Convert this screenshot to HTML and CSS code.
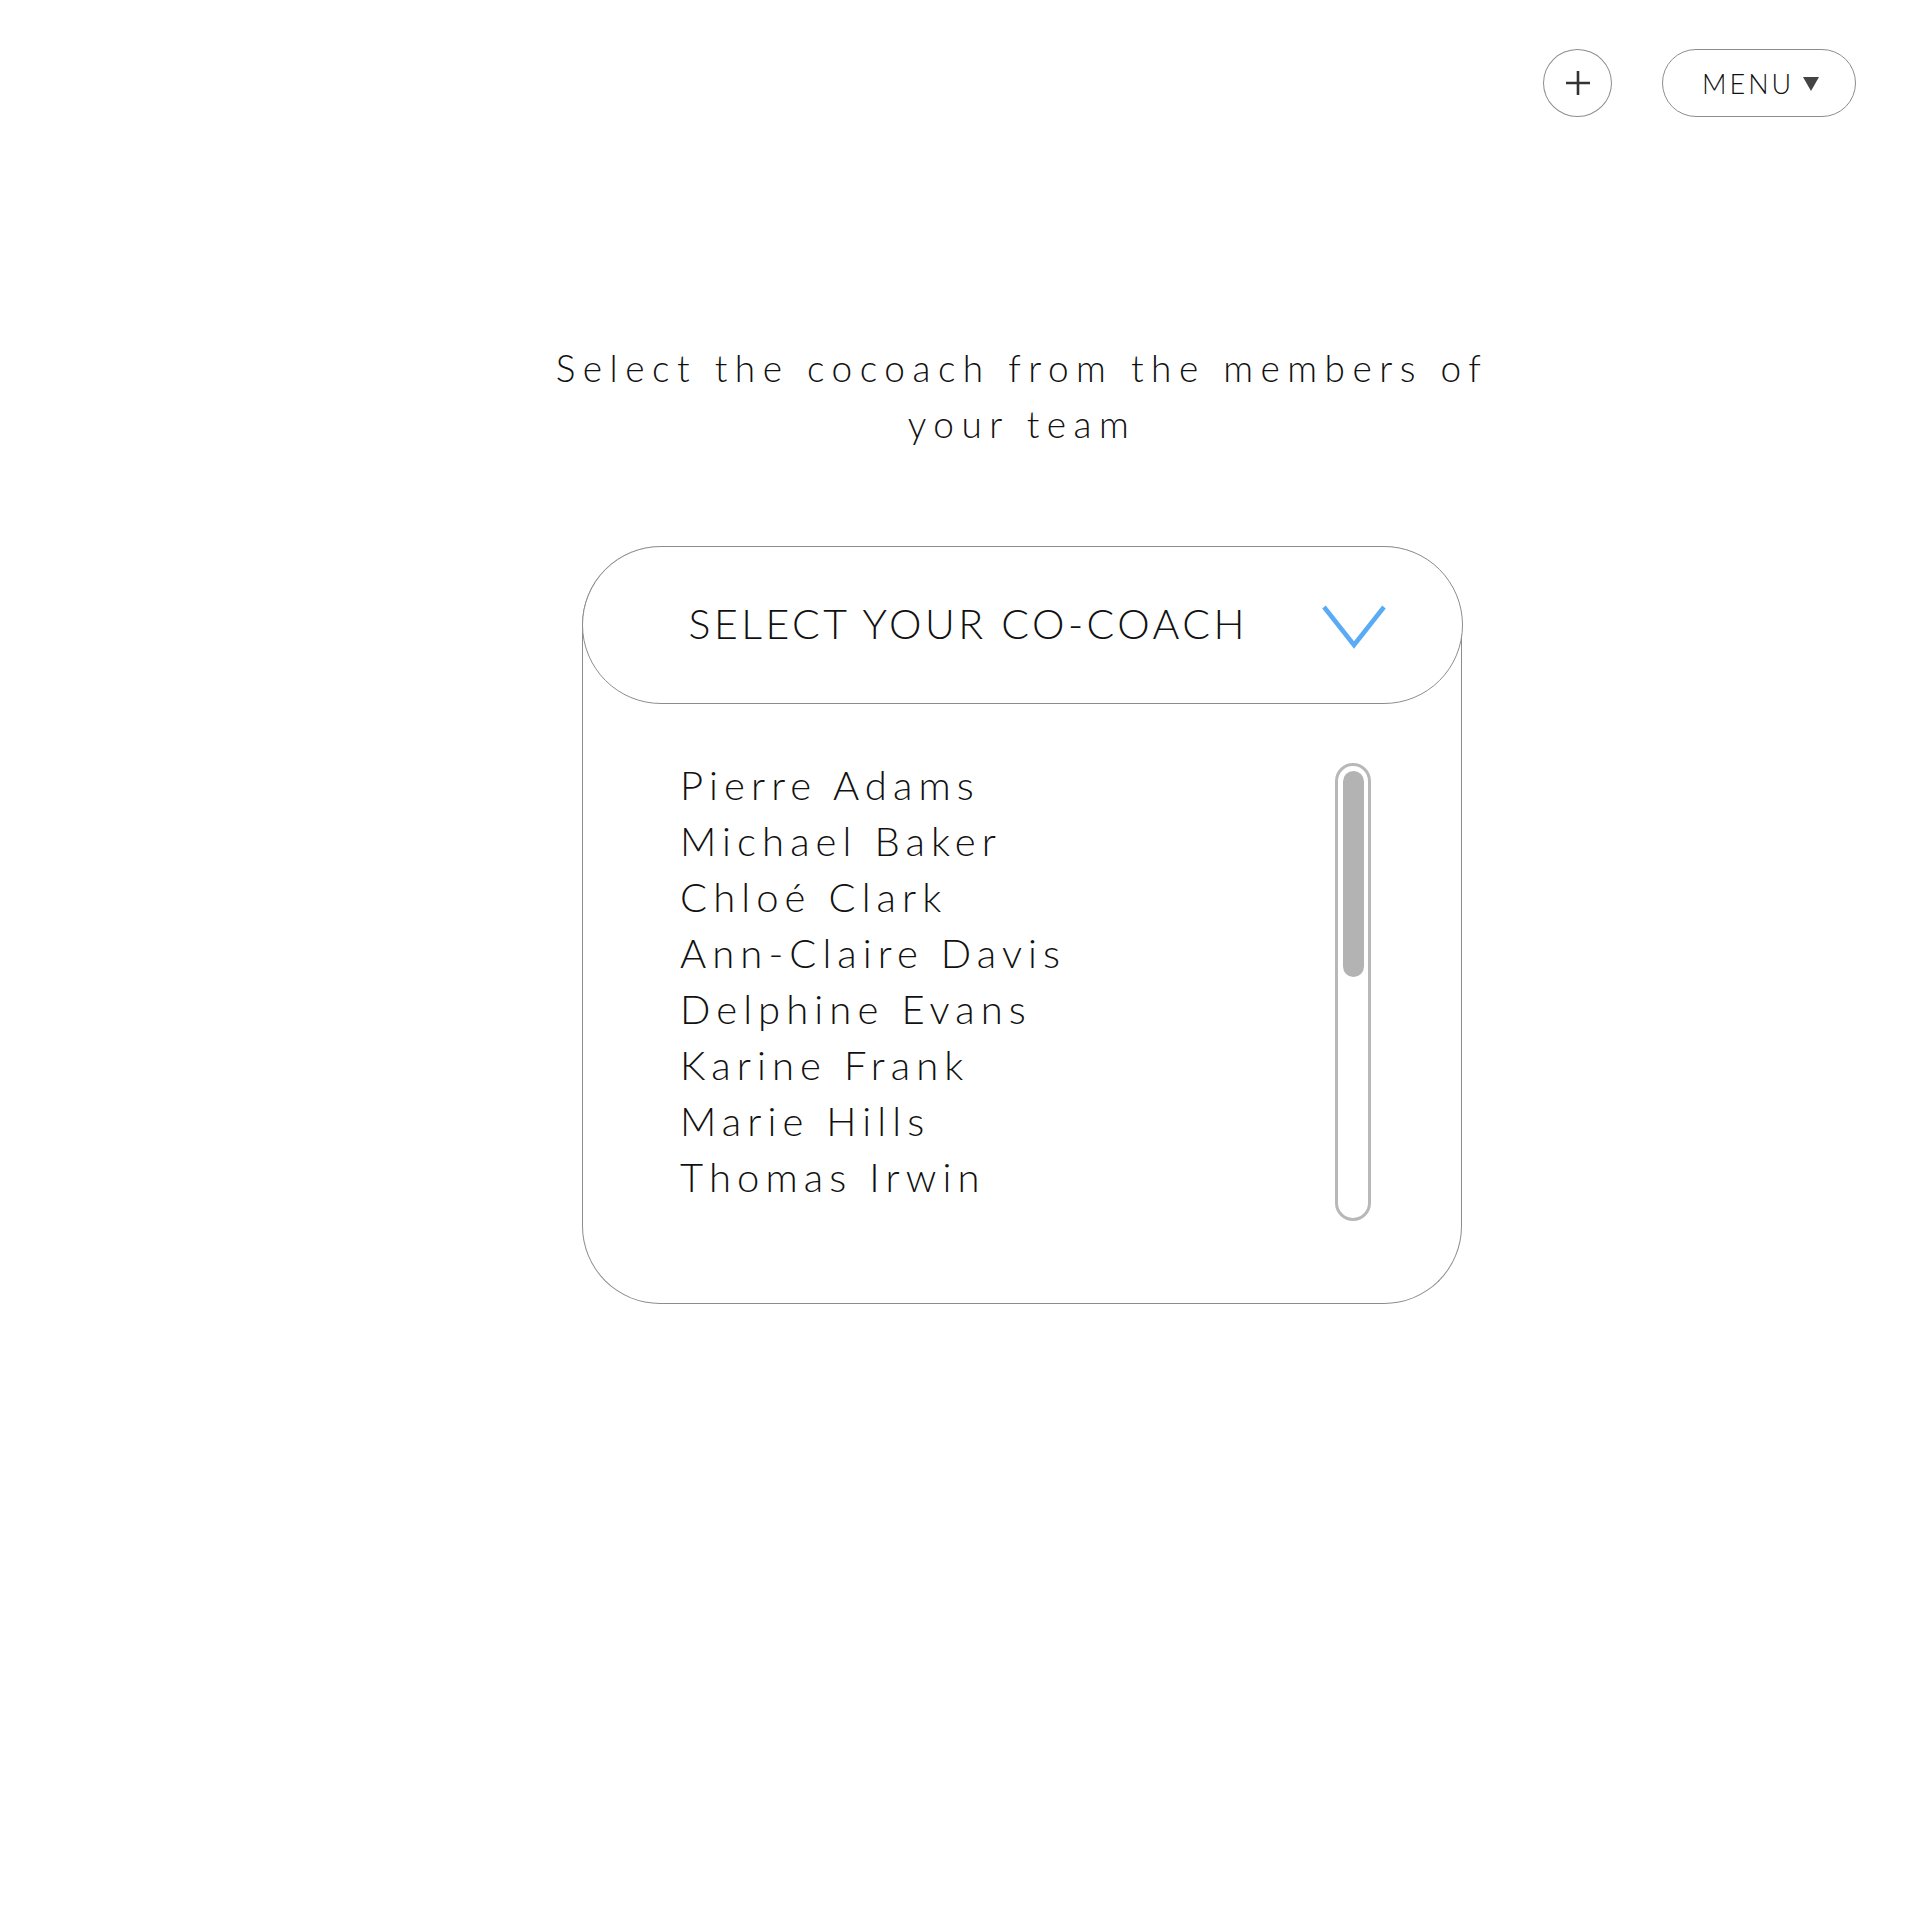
FILE: index.html
```html
<!DOCTYPE html>
<html lang="en">
<head>
  <meta charset="UTF-8">
  <meta name="viewport" content="width=device-width, initial-scale=1.0">
  <title>Select your co-coach</title>
  <link rel="stylesheet" href="styles.css">
</head>
<body>
  <header class="top-bar">
    <button class="round-btn" type="button" aria-label="Add">
      <svg width="26" height="26" viewBox="0 0 26 26"><path d="M13 1v24M1 13h24" stroke="#333" stroke-width="2.6" fill="none"/></svg>
    </button>
    <button class="menu-btn" type="button">
      MENU
      <svg width="16" height="14" viewBox="0 0 16 14"><path d="M0 0h16L8 14z" fill="#444"/></svg>
    </button>
  </header>

  <main class="page">
    <h1 class="title">Select the cocoach from the members of your team</h1>

    <div class="picker">
      <div class="picker-head">
        <span class="picker-label">SELECT YOUR CO-COACH</span>
        <svg class="chevron" width="64" height="44" viewBox="0 0 64 44"><path d="M2 2l30 38L62 2" stroke="#5aabf6" stroke-width="4.5" fill="none"/></svg>
      </div>

      <div class="picker-body">
        <ul class="members">
          <li>Pierre Adams</li>
          <li>Michael Baker</li>
          <li>Chloé Clark</li>
          <li>Ann-Claire Davis</li>
          <li>Delphine Evans</li>
          <li>Karine Frank</li>
          <li>Marie Hills</li>
          <li>Thomas Irwin</li>
        </ul>
        <div class="scroll-track">
          <div class="scroll-thumb"></div>
        </div>
      </div>
    </div>
  </main>
</body>
</html>
```

FILE: styles.css
```css
body {
  margin: 0;
  background: #fff;
  color: #111;
  font-family: Lato, "Open Sans", sans-serif;
  font-weight: 300;
}
button {
  font-family: inherit;
  font-weight: inherit;
  background: #fff;
  cursor: pointer;
}
.top-bar {
  display: flex;
  justify-content: flex-end;
  align-items: center;
  gap: 50px;
  padding: 49px 64px 0;
}
.round-btn {
  width: 69px;
  height: 68px;
  border: 1.5px solid #8d8d8d;
  border-radius: 50%;
  padding: 0;
  display: flex;
  align-items: center;
  justify-content: center;
}
.menu-btn {
  height: 68px;
  width: 194px;
  border: 1.5px solid #8d8d8d;
  border-radius: 34px;
  padding: 0 36px 0 39px;
  display: flex;
  align-items: center;
  justify-content: space-between;
  font-size: 27px;
  letter-spacing: 3px;
  color: #111;
}
.menu-btn svg {
  margin-top: 1px;
}
.page {
  padding-left: 124px;
}
.title {
  max-width: 960px;
  margin: 223px auto 0;
  text-align: center;
  font-size: 37px;
  font-weight: 300;
  line-height: 56px;
  letter-spacing: 7.5px;
}
.picker {
  width: 878px;
  margin: 94px auto 0;
  border: 1.5px solid #8d8d8d;
  border-top: 0;
  border-radius: 79px 79px 78px 78px;
}
.picker-head {
  box-sizing: border-box;
  height: 158px;
  margin: 0 -1.5px;
  border: 1.5px solid #8d8d8d;
  border-radius: 79px;
  background: #fff;
  display: flex;
  align-items: center;
  justify-content: space-between;
  padding: 0 76px 0 106px;
}
.picker-label {
  font-size: 41px;
  letter-spacing: 3.5px;
  margin-bottom: 4px;
}
.chevron {
  margin-top: 4px;
}
.picker-body {
  display: flex;
  justify-content: space-between;
  align-items: flex-start;
  padding: 53px 90px 82px 97px;
}
.members {
  list-style: none;
  margin: 0;
  padding: 0;
  font-size: 40px;
  line-height: 56px;
  letter-spacing: 6.1px;
}
.scroll-track {
  box-sizing: border-box;
  width: 36px;
  height: 458px;
  margin-top: 6px;
  border: 3px solid #b8b8b8;
  border-radius: 18px;
  padding: 5px 4.5px;
}
.scroll-thumb {
  height: 206px;
  border-radius: 11px;
  background: #b3b3b3;
}
```
